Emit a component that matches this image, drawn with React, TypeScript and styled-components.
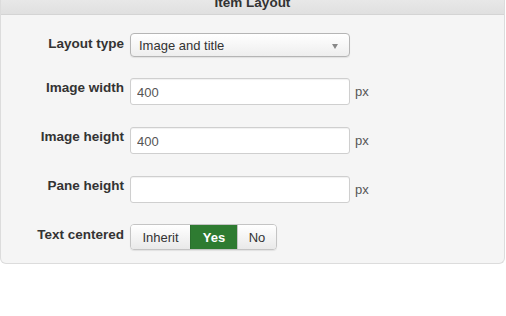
import styled, { createGlobalStyle } from "styled-components";

const GlobalStyle = createGlobalStyle`
  html, body {
    margin: 0;
    padding: 0;
    background: #ffffff;
    font-family: "Liberation Sans", Arial, sans-serif;
  }
`;

const Panel = styled.section`
  margin-top: -14px;
  width: 505px;
  background: #f5f5f5;
  border: 1px solid #dcdcdc;
  border-top: none;
  border-radius: 0 0 6px 6px;
  box-sizing: border-box;
`;

const Header = styled.div`
  height: 28px;
  line-height: 33px;
  text-align: center;
  font-size: 13.5px;
  font-weight: bold;
  color: #333;
  background: linear-gradient(#efefef, #e0e0e0);
  border-bottom: 1px solid #d4d4d4;
  overflow: hidden;
`;

const Form = styled.div`
  display: flex;
  flex-direction: column;
  padding: 18px 0 13px;
`;

const Row = styled.div<{ $h: number }>`
  display: flex;
  align-items: flex-start;
  height: ${({ $h }) => $h}px;
`;

const Label = styled.label<{ $top: number }>`
  width: 123px;
  padding-top: ${({ $top }) => $top}px;
  margin-right: 6px;
  text-align: right;
  font-size: 13.5px;
  font-weight: bold;
  color: #333;
  line-height: 16px;
`;

const Field = styled.div`
  display: flex;
  align-items: center;
`;

const Select = styled.div`
  position: relative;
  width: 220px;
  height: 24px;
  box-sizing: border-box;
  padding-left: 8px;
  display: flex;
  align-items: center;
  font-size: 13px;
  color: #333;
  background: linear-gradient(#ffffff, #eeeeee);
  border: 1px solid #b5b5b5;
  border-radius: 4px;
  box-shadow: 0 1px 1px rgba(0, 0, 0, 0.08);
`;

const Arrow = styled.span`
  position: absolute;
  right: 11px;
  top: 10px;
  width: 0;
  height: 0;
  border-left: 3.5px solid transparent;
  border-right: 3.5px solid transparent;
  border-top: 5px solid #888;
`;

const TextInput = styled.input`
  width: 220px;
  height: 27px;
  box-sizing: border-box;
  padding: 2px 6px 0;
  font-family: "Liberation Sans", Arial, sans-serif;
  font-size: 13px;
  color: #555;
  background: #fff;
  border: 1px solid #cfcfcf;
  border-radius: 3px;
  box-shadow: inset 0 1px 1px rgba(0, 0, 0, 0.06);
  outline: none;
`;

const Unit = styled.span`
  margin-left: 5px;
  font-size: 13px;
  color: #555;
`;

const ButtonGroup = styled.div`
  display: flex;
  height: 26px;
  box-sizing: border-box;
  border: 1px solid #c4c4c4;
  border-radius: 4px;
  overflow: hidden;
  box-shadow: 0 1px 1px rgba(0, 0, 0, 0.08);
`;

const ToggleButton = styled.button<{ $active?: boolean; $w: number }>`
  width: ${({ $w }) => $w}px;
  padding: 0;
  margin: 0;
  border: none;
  border-left: 1px solid ${({ $active }) => ($active ? "#2a6f2d" : "#c4c4c4")};
  font-family: "Liberation Sans", Arial, sans-serif;
  font-size: 13px;
  font-weight: ${({ $active }) => ($active ? "bold" : "normal")};
  color: ${({ $active }) => ($active ? "#ffffff" : "#333")};
  background: ${({ $active }) =>
    $active ? "#2e7b31" : "linear-gradient(#ffffff, #e9e9e9)"};

  &:first-child {
    border-left: none;
  }
`;

export default function App() {
  return (
    <>
      <GlobalStyle />
      <Panel>
        <Header>Item Layout</Header>
        <Form>
          <Row $h={45}>
            <Label $top={3}>Layout type</Label>
            <Select>
              Image and title
              <Arrow />
            </Select>
          </Row>
          <Row $h={49}>
            <Label $top={2}>Image width</Label>
            <Field>
              <TextInput defaultValue="400" />
              <Unit>px</Unit>
            </Field>
          </Row>
          <Row $h={49}>
            <Label $top={2}>Image height</Label>
            <Field>
              <TextInput defaultValue="400" />
              <Unit>px</Unit>
            </Field>
          </Row>
          <Row $h={48}>
            <Label $top={2}>Pane height</Label>
            <Field>
              <TextInput defaultValue="" />
              <Unit>px</Unit>
            </Field>
          </Row>
          <Row $h={26}>
            <Label $top={3}>Text centered</Label>
            <ButtonGroup>
              <ToggleButton $w={59}>Inherit</ToggleButton>
              <ToggleButton $w={47} $active>
                Yes
              </ToggleButton>
              <ToggleButton $w={39}>No</ToggleButton>
            </ButtonGroup>
          </Row>
        </Form>
      </Panel>
    </>
  );
}
